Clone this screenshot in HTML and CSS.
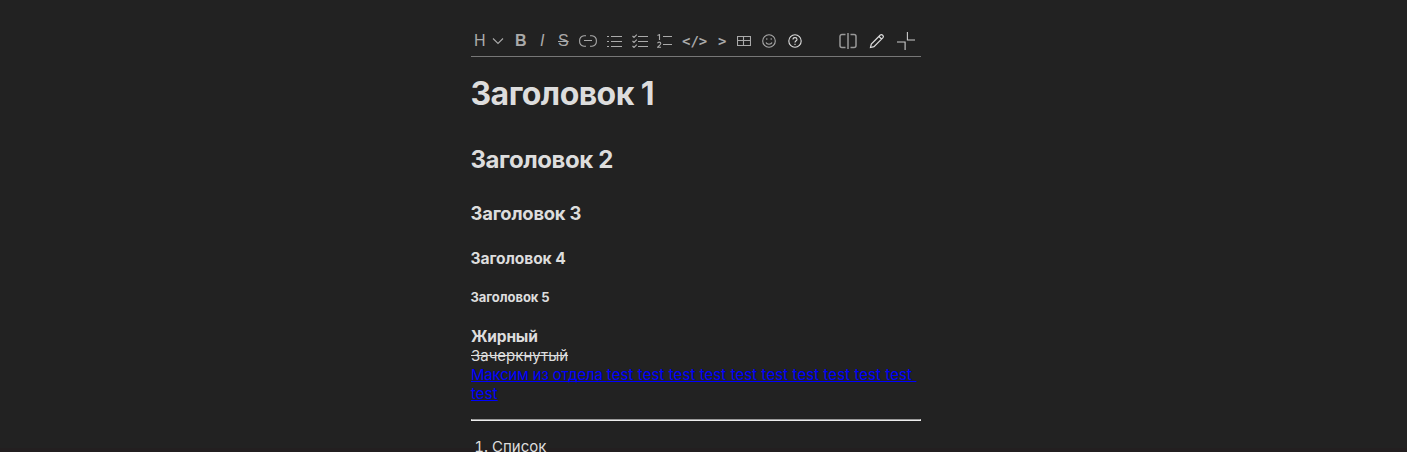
FILE: index.html
```html
<!DOCTYPE html>
<html lang="ru">
<head>
<meta charset="utf-8">
<title>Редактор</title>
<link rel="stylesheet" href="styles.css">
</head>
<body>
<div class="page">
<main class="editor">
<div class="toolbar">
<span class="tool heading">H</span>
<svg class="icon chevron" width="12" height="8" viewBox="0 0 12 8"><path d="M1 1.500l5 5 5-5"/></svg>
<span class="tool bold">B</span>
<span class="tool italic">I</span>
<span class="tool strike">S</span>
<svg class="icon link" width="18" height="12" viewBox="0 0 18 12"><path d="M7 .8H5a4.500 4.500 0 0 0-4.300 5.200A4.500 4.500 0 0 0 5 11.200h2M11 .8h2A4.500 4.500 0 0 1 17.300 6 4.500 4.500 0 0 1 13 11.200h-2M5 5.500h8"/></svg>
<svg class="icon bullets" width="15" height="14" viewBox="0 0 15 14"><path d="M4 2.500h11M4 7.500h11M4 12.500h11M0 2.500h2M0 7.500h2M0 12.500h2"/></svg>
<svg class="icon checks" width="16" height="14" viewBox="0 0 16 14"><path d="M6 2.500h10M6 7.500h10M6 12.500h10M.5 2l1.500 1.500L4.800.7M.5 7L2 8.500l2.800-2.800M.5 12L2 13.500l2.800-2.800"/></svg>
<svg class="icon numbers" width="15" height="14" viewBox="0 0 15 14"><path d="M6 2.500h9M6 10.500h9M.5 1.500L2.500.6V6M.6 9.300C.7 7.800 3.800 7.700 3.800 9.500 3.800 10.800 1.500 11.800.6 13.300H4"/></svg>
<span class="tool code">&lt;/&gt;</span>
<span class="tool quote">&gt;</span>
<svg class="icon table" width="14" height="10" viewBox="0 0 14 10"><path d="M.5.5h13v9H.5zM.5 4.500h13M6.500.5v9"/></svg>
<svg class="icon smile" width="14" height="14" viewBox="0 0 14 14"><circle cx="7" cy="7" r="6.300"/><path d="M4 8.500c.8 2.300 5.200 2.300 6 0M4.800 4.300v1.400M9.200 4.300v1.400"/></svg>
<svg class="icon help" width="14" height="14" viewBox="0 0 14 14"><circle cx="7" cy="7" r="6.200"/><path d="M5 5.500c0-2.600 4-2.500 4-.1C9 6.800 7 6.800 7 8.500M7 9.700v1.300"/></svg>
<svg class="icon split" width="18" height="16" viewBox="0 0 18 16"><path d="M6.500 1.500H3a2 2 0 0 0-2 2v9a2 2 0 0 0 2 2h3.500M11.500 1.500H15a2 2 0 0 1 2 2v9a2 2 0 0 1-2 2h-3.500M9 0v16"/></svg>
<svg class="icon pencil" width="16" height="16" viewBox="0 0 16 16"><path d="M1.500 14.500l.8-3.500 9-9c1.500-1.300 4 1 2.700 2.700l-9 9zM10 3.500l2.500 2.500"/></svg>
<svg class="icon shrink" width="18" height="18" viewBox="0 0 18 18"><path d="M10.400 0v8H18M0 10h8.100v8"/></svg>
</div>
<article class="content">
<h1>Заголовок 1</h1>
<h2>Заголовок 2</h2>
<h3>Заголовок 3</h3>
<h4>Заголовок 4</h4>
<h5>Заголовок 5</h5>
<p class="text"><b>Жирный</b><br><s>Зачеркнутый</s><br><a href="#"><span class="cyrillic">Максим из отдела </span>test test test test test test test test test test&nbsp;<br>test</a></p>
<hr>
<ol><li>Список</li></ol>
</article>
</main>
</div>
</body>
</html>
```
FILE: styles.css
```css
* { box-sizing: border-box; }
body { margin: 0; background: #fff; font-family: Inter, "Noto Sans", sans-serif; }
.page { width: 1407px; height: 452px; overflow: hidden; background: linear-gradient(#222 448px, #231f20 448px); }
.editor { width: 450px; margin-left: 471px; color: #ddd; }
.toolbar { display: flex; align-items: center; height: 57px; padding-top: 25px; border-bottom: 1px solid #777; color: #aaa; font: 16px "Liberation Sans", Arial, sans-serif; }
.tool { flex: none; line-height: 18px; }
.icon { flex: none; fill: none; stroke: currentColor; stroke-width: 1.1; }
.heading { width: 21px; padding-left: 3px; }
.bold { width: 24px; margin-left: 11px; font-weight: 700; }
.italic { width: 19px; padding-left: 1px; font-style: italic; }
.strike { width: 21px; text-decoration: line-through; }
.bullets { margin-left: 10px; }
.checks { margin-left: 10px; }
.numbers { margin-left: 9px; }
.code { margin-left: 10px; width: 36px; font: bold 14px "DejaVu Sans Mono", monospace; }
.quote { width: 19px; font: bold 14px "DejaVu Sans Mono", monospace; }
.smile { margin-left: 11px; }
.help { margin-left: 11.5px; color: #ddd; }
.split { margin-left: 37.5px; stroke-width: 1.5; color: #999; }
.pencil { margin-left: 12px; color: #ddd; stroke-width: 1.2; }
.shrink { margin-left: 12px; color: #ccc; stroke-width: 1.1; }
.content { display: flex; flex-direction: column; padding-top: 18px; }
h1, h2, h3, h4, h5 { margin: 0 0 0 -0.5px; font-weight: 650; white-space: nowrap; }
h1 { font-size: 32px; line-height: 38px; letter-spacing: -0.55px; }
h2 { margin-top: 32px; font-size: 24px; line-height: 29px; letter-spacing: -0.42px; }
h3 { margin-top: 28px; font-size: 18.4px; line-height: 23px; letter-spacing: -0.2px; }
h4 { margin-top: 24px; font-size: 15.6px; line-height: 19px; letter-spacing: -0.1px; }
h5 { margin-top: 21px; font-size: 13px; line-height: 16px; letter-spacing: -0.06px; }
.text { margin: 22px 0 0; font-size: 15px; line-height: 19px; white-space: nowrap; }
b { font-weight: 650; font-size: 15.5px; letter-spacing: -0.2px; }
a { color: #00f; letter-spacing: 0.08px; text-decoration-thickness: 1px; text-underline-offset: 1px; text-decoration-skip-ink: none; }
.cyrillic { letter-spacing: -0.18px; }
hr { width: 450px; margin: 16px 0 0; border: 1px solid #eee; border-top-color: #999; }
ol { margin: 16px 0 0; padding-left: 21px; font-size: 15px; line-height: 19px; }
```
